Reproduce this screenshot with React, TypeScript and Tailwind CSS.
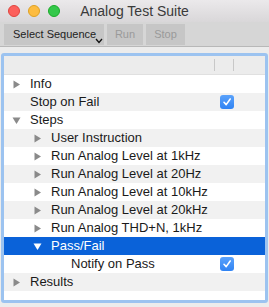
import React from "react";

const font = { fontFamily: '"Liberation Sans", Arial, sans-serif' };

function Tri({ open, white }: { open?: boolean; white?: boolean }) {
  const fill = white ? "#ffffff" : "#8a8a8a";
  return (
    <svg width="9" height="9" viewBox="0 0 9 9" className="shrink-0">
      {open ? <path d="M0.5 1.5 L8.5 1.5 L4.5 8 Z" fill={fill} /> : <path d="M1.5 0.5 L8 4.5 L1.5 8.5 Z" fill={fill} />}
    </svg>
  );
}

function Check() {
  return (
    <div className="w-[14px] h-[14px] rounded-[3px] bg-gradient-to-b from-[#5aa2fb] to-[#2f83f3] flex items-center justify-center">
      <svg width="10" height="10" viewBox="0 0 10 10">
        <path d="M2 5.3 L4.2 7.6 L8.2 2" stroke="#fff" strokeWidth="1.6" fill="none" strokeLinecap="round" strokeLinejoin="round" />
      </svg>
    </div>
  );
}

type Row = { label: string; level: number; tri?: "open" | "closed"; check?: boolean; selected?: boolean };

const rows: Row[] = [
  { label: "Info", level: 0, tri: "closed" },
  { label: "Stop on Fail", level: 0, check: true },
  { label: "Steps", level: 0, tri: "open" },
  { label: "User Instruction", level: 1, tri: "closed" },
  { label: "Run Analog Level at 1kHz", level: 1, tri: "closed" },
  { label: "Run Analog Level at 20Hz", level: 1, tri: "closed" },
  { label: "Run Analog Level at 10kHz", level: 1, tri: "closed" },
  { label: "Run Analog Level at 20kHz", level: 1, tri: "closed" },
  { label: "Run Analog THD+N, 1kHz", level: 1, tri: "closed" },
  { label: "Pass/Fail", level: 1, tri: "open", selected: true },
  { label: "Notify on Pass", level: 2, check: true },
  { label: "Results", level: 0, tri: "closed" },
];

const indent = ["pl-[26px]", "pl-[47px]", "pl-[67px]"];
const triIndent = ["pl-[8px]", "pl-[29px]", "pl-[49px]"];

export default function App() {
  return (
    <div className="w-[269px] h-[307px] bg-[#ececec] flex flex-col overflow-hidden text-[#1a1a1a]" style={font}>
      <div className="h-[22px] grid grid-cols-[1fr_auto_1fr] items-center bg-gradient-to-b from-[#ebe9eb] to-[#d9d7d9]">
        <div className="flex items-center gap-[8px] pl-[8px]">
          <div className="w-[12px] h-[12px] rounded-full bg-[#fc605c] border border-[#e0443e]" />
          <div className="w-[12px] h-[12px] rounded-full bg-[#fdbc40] border border-[#dea123]" />
          <div className="w-[12px] h-[12px] rounded-full bg-[#34c84a] border border-[#1aab29]" />
        </div>
        <div className="text-[14px] text-[#3a3a3a] leading-none whitespace-nowrap">Analog Test Suite</div>
        <div />
      </div>
      <div className="h-[25px] bg-[#d6d6d6] border-b border-[#b8b8b8] flex items-center gap-[3px] pl-[4px] pt-[1px]">
        <div className="w-[100px] h-[21px] bg-[#c6c6c6] flex items-center pl-[9px] text-[11px] text-[#222] relative whitespace-nowrap">
          Select Sequence
          <svg width="8" height="6" viewBox="0 0 8 6" className="absolute left-[91px] top-[14px]">
            <path d="M1 1 L4 4.5 L7 1" stroke="#111" strokeWidth="1.3" fill="none" />
          </svg>
        </div>
        <div className="w-[36px] h-[21px] bg-[#c6c6c6] flex items-center justify-center text-[11px] text-[#9a9a9a]">Run</div>
        <div className="w-[39px] h-[21px] bg-[#c6c6c6] flex items-center justify-center text-[11px] text-[#9a9a9a]">Stop</div>
      </div>
      <div className="h-[6px]" />
      <div className="mx-[1px] h-[250px] border-[3px] border-[#9cc3f0] rounded-[3px] bg-white flex flex-col">
        <div className="h-[19px] bg-[#ececec] border-b border-[#e0e0e0] flex items-center shrink-0">
          <div className="w-[210px]" />
          <div className="w-px h-[12px] bg-[#c8c8c8]" />
          <div className="w-[18px]" />
          <div className="w-px h-[12px] bg-[#c8c8c8]" />
        </div>
        {rows.map((r, i) => {
          const bg = r.selected ? "bg-[#0a62d9] text-white" : i % 2 === 1 ? "bg-[#f1f1f1]" : "bg-white";
          return (
            <div key={i} className={`h-[18px] shrink-0 flex items-center text-[13px] whitespace-nowrap ${bg}`}>
              {r.tri ? (
                <div className={`flex items-center gap-[9px] ${triIndent[r.level]}`}>
                  <Tri open={r.tri === "open"} white={r.selected} />
                  <span>{r.label}</span>
                </div>
              ) : (
                <div className={indent[r.level]}>{r.label}</div>
              )}
              {r.check && (
                <div className="ml-auto mr-[31px]">
                  <Check />
                </div>
              )}
            </div>
          );
        })}
      </div>
    </div>
  );
}
